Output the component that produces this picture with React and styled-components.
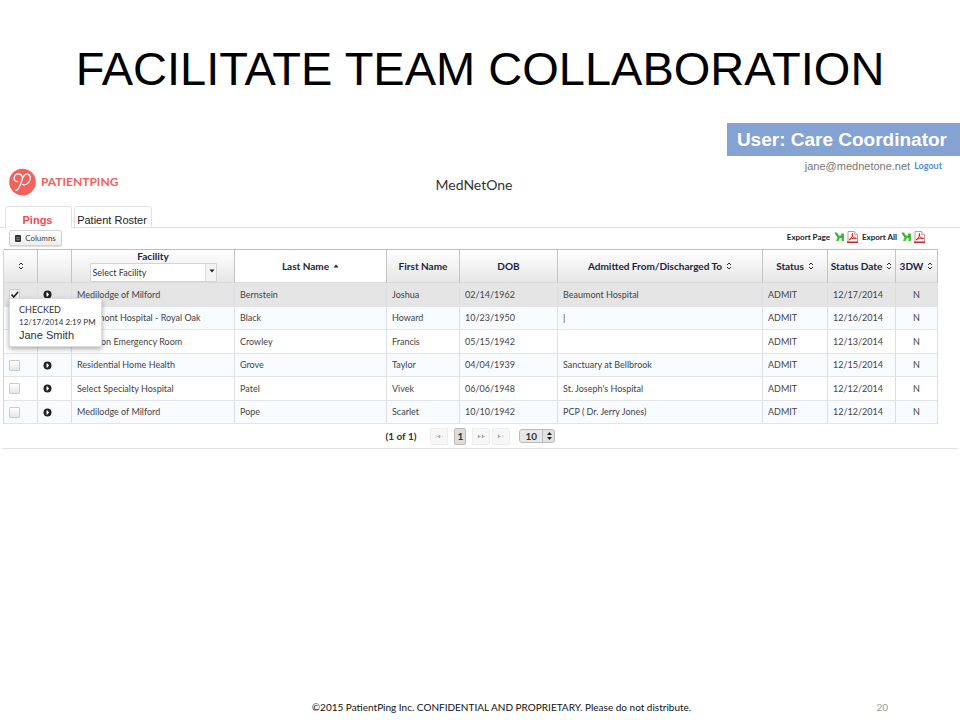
import { useState } from 'react'
import styled, { createGlobalStyle } from 'styled-components'

const GlobalStyle = createGlobalStyle`
  * {
    box-sizing: border-box;
  }

  body {
    margin: 0;
    background-color: #fff;
    color: #444;
    font-family: Lato, 'Liberation Sans', sans-serif;
    font-size: 9px;
  }

  button, input, select {
    margin: 0;
    font: inherit;
    color: inherit;
  }
`

const Page = styled.div`
  min-height: 100vh;
  display: flex;
  flex-direction: column;
`

const Title = styled.h1`
  margin: 0;
  padding-top: 41px;
  height: 123px;
  font: 47px/56px 'Liberation Sans', sans-serif;
  text-align: center;
  color: #000;
`

const UserBanner = styled.div`
  align-self: flex-end;
  padding: 0 13px 0 10px;
  font: bold 19px/33px 'Liberation Sans', sans-serif;
  color: #fff;
  background-color: #84a3d2;
`

const Header = styled.header`
  height: 50px;
  display: grid;
  grid-template-columns: 1fr auto 1fr;
`

const Brand = styled.a`
  padding: 12px 0 0 8px;
  display: flex;
  align-items: flex-start;
  gap: 5px;
  font: bold 12px/28px Lato, sans-serif;
  color: #f4615c;
  text-decoration: none;
`

const Organization = styled.h2`
  margin: 0;
  padding: 20px 12px 0 0;
  font: 14px/18px Lato, sans-serif;
  color: #333;
`

const Account = styled.div`
  padding: 3px 18px 0 0;
  display: flex;
  justify-content: flex-end;
  gap: 4px;
  font: 11px/14px 'Liberation Sans', sans-serif;
  color: #777;

  a {
    font-family: Lato, sans-serif;
    font-size: 9px;
    font-weight: bold;
    color: #4d8fd1;
    text-decoration: none;
  }
`

const Tabs = styled.nav`
  padding-left: 5px;
  display: flex;
  align-items: flex-end;
  gap: 2px;
  border-bottom: 1px solid #e2e2e2;
`

const Tab = styled.button`
  width: ${props => props.$width};
  height: 22px;
  margin-bottom: -1px;
  padding: 5px 2px 0 0;
  border: 1px solid #e2e2e2;
  border-bottom-color: ${props => props.$active ? '#fff' : '#e2e2e2'};
  border-radius: 3px 3px 0 0;
  font: ${props => props.$active ? 'bold' : 'normal'} 11px/14px 'Liberation Sans', sans-serif;
  color: ${props => props.$active ? '#ee4b55' : '#222'};
  background-color: #fff;
  white-space: nowrap;
  cursor: pointer;
`

const Panel = styled.main`
  margin: 0 2px;
  padding: 0 20px 0 1px;
  border-bottom: 1px solid #e2e2e2;
`

const Toolbar = styled.div`
  height: 21px;
  padding: 2px 13px 0 6px;
  display: flex;
  justify-content: space-between;
  align-items: flex-start;
`

const ColumnsButton = styled.button`
  width: 53px;
  height: 16px;
  padding: 0;
  display: flex;
  align-items: center;
  justify-content: center;
  gap: 4px;
  border: 1px solid #d2d2d2;
  border-radius: 2px;
  font-size: 8px;
  line-height: 14px;
  background: linear-gradient(#fff, #eee);
  box-shadow: 0 1px 1px #00000022;
`

const Exports = styled.div`
  display: flex;
  gap: 4px;
`

const ExportGroup = styled.div`
  display: flex;
  align-items: center;
  gap: 2px;
  font: bold 8px/14px Lato, sans-serif;
  color: #222;

  span {
    margin-right: 2px;
  }
`

const IconButton = styled.button`
  padding: 0;
  display: flex;
  border: 0;
  background: none;
  cursor: pointer;
`

const Table = styled.table`
  width: 100%;
  table-layout: fixed;
  border-collapse: separate;
  border-spacing: 0;
  border-left: 1px solid #d6d6d6;
`

const HeadCell = styled.th`
  height: 34px;
  padding: 0;
  border-top: 1px solid #bdbdbd;
  border-right: 1px solid #c4c4c4;
  border-bottom: 1px solid #dcdcdc;
  font-size: 10px;
  font-weight: bold;
  line-height: 12px;
  white-space: nowrap;
  color: #1b2444;
  background: ${props => props.$sorted ? '#fff' : 'linear-gradient(#fff, #e6e6e6)'};
`

const HeadLabel = styled.div`
  display: flex;
  align-items: center;
  justify-content: center;
  gap: 4px;
`

const FacilityHead = styled.div`
  height: 32px;
  display: flex;
  flex-direction: column;
  align-items: center;
  gap: 1px;
`

const FacilitySelect = styled.div`
  position: relative;
  width: 127px;

  select {
    display: block;
    width: 100%;
    height: 19px;
    padding: 0 2px;
    appearance: none;
    border: 1px solid #d4d4d4;
    border-radius: 1px;
    font-size: 9px;
    font-weight: normal;
    color: #333;
    background: linear-gradient(to left, #f4f4f4 10px, #ddd 10px, #ddd 11px, #fff 11px);
  }

  svg {
    position: absolute;
    top: 5px;
    right: 2px;
    pointer-events: none;
  }
`

const Row = styled.tr`
  height: 23px;
  background-color: ${props => props.$selected ? '#e5e5e5' : '#fff'};

  &:nth-child(odd) {
    height: 24px;
  }

  &:nth-child(even) {
    background-color: #f8fbff;
  }
`

const Cell = styled.td`
  padding: 0 5px;
  border-right: 1px solid #dcdfe3;
  border-bottom: 1px solid #e2e4e8;
  line-height: 12px;
  text-align: ${props => props.$align || 'left'};
  white-space: nowrap;
`

const CheckCell = styled(Cell)`
  position: relative;
`

const Check = styled.input`
  display: block;
  width: 11px;
  height: 11px;
  appearance: none;
  border: 1px solid #ccc;
  border-radius: 1px;
  background: linear-gradient(#fff, #e6e6e6);

  &:checked {
    background: #f1f1f1 url("data:image/svg+xml,%3Csvg xmlns='http://www.w3.org/2000/svg' viewBox='0 0 9 9'%3E%3Cpath d='M1.5 4.5 3.7 7 8 2' fill='none' stroke='%23222' stroke-width='1.7'/%3E%3C/svg%3E");
  }
`

const Popover = styled.div`
  position: absolute;
  z-index: 1;
  top: 15px;
  left: 5px;
  width: 93px;
  height: 49px;
  padding: 4px 9px;
  border: 1px solid #ddd;
  border-radius: 2px;
  line-height: 13px;
  color: #333;
  background-color: #fff;
  box-shadow: 0 2px 5px #00000055;
`

const CheckedAt = styled.div`
  font-size: 8px;
`

const CheckedBy = styled.div`
  font: 11px/12px 'Liberation Sans', sans-serif;
`

const Pager = styled.div`
  height: 24px;
  display: flex;
  align-items: center;
  justify-content: center;
  font-size: 10px;
  font-weight: bold;
  color: #333;
`

const PagerGroup = styled.div`
  margin: 0 9px 0 14px;
  display: flex;
  gap: 2px;
`

const PageButton = styled.button`
  width: ${props => props.$current ? '12px' : '18px'};
  height: 17px;
  margin: ${props => props.$current ? '0 4px' : '0'};
  padding: 0;
  display: flex;
  align-items: center;
  justify-content: center;
  border: 1px solid ${props => props.$current ? '#bbb' : '#eee'};
  border-radius: 2px;
  background-color: ${props => props.$current ? '#ddd' : '#f7f7f7'};
`

const PageSize = styled.div`
  position: relative;

  select {
    display: block;
    width: 36px;
    height: 14px;
    padding: 0 5px;
    appearance: none;
    border: 1px solid #bbb;
    border-radius: 3px;
    line-height: 12px;
    background: linear-gradient(to left, #e2e2e2 11px, #bbb 11px, #bbb 12px, #e8e8e8 12px);
  }

  svg {
    position: absolute;
    top: 3px;
    right: 3px;
    pointer-events: none;
  }
`

const Footer = styled.footer`
  margin-top: auto;
  padding-bottom: 6px;
  display: grid;
  grid-template-columns: 1fr auto 1fr;
  font: 10px/14px Lato, sans-serif;
  color: #111;
`

const Copyright = styled.span`
  grid-column: 2;
  padding-left: 43px;
`

const SlideNumber = styled.span`
  padding-right: 72px;
  text-align: right;
  color: #999;
`

const columns = [
  { name: 'Last Name', width: 152, sorted: true },
  { name: 'First Name', width: 73 },
  { name: 'DOB', width: 98 },
  { name: 'Admitted From/Discharged To', width: 205, sortable: true },
  { name: 'Status', width: 65, sortable: true },
  { name: 'Status Date', width: 68, sortable: true },
  { name: '3DW', width: 42, sortable: true },
]

const patients = [
  ['Medilodge of Milford', 'Bernstein', 'Joshua', '02/14/1962', 'Beaumont Hospital', '12/17/2014'],
  ['Beaumont Hospital - Royal Oak', 'Black', 'Howard', '10/23/1950', '|', '12/16/2014'],
  ['Brighton Emergency Room', 'Crowley', 'Francis', '05/15/1942', '', '12/13/2014'],
  ['Residential Home Health', 'Grove', 'Taylor', '04/04/1939', 'Sanctuary at Bellbrook', '12/15/2014'],
  ['Select Specialty Hospital', 'Patel', 'Vivek', '06/06/1948', "St. Joseph's Hospital", '12/12/2014'],
  ['Medilodge of Milford', 'Pope', 'Scarlet', '10/10/1942', 'PCP ( Dr. Jerry Jones)', '12/12/2014'],
]

const Logo = () => (
  <svg width="28" height="28" viewBox="0 0 28 28">
    <circle cx="14.500" cy="14" r="13.300" fill="#f4615c" />
    <path
      d="M8 22.500C11 22 12.500 17 14 12C15.500 7.500 17 5.500 19.500 6C22.500 6.500 23 10 21.500 13C20 16 17 17.500 14.500 16.500M14.500 9C13 5.500 9 5 7 7.500C5 10.500 6.500 14 9.500 13.500"
      fill="none"
      stroke="#fff"
      strokeWidth="1.300"
      strokeLinecap="round"
    />
  </svg>
)

const SortIcon = () => (
  <svg width="6" height="8" viewBox="0 0 6 8">
    <path d="M1 3 3 1 5 3M1 5 3 7 5 5" fill="none" stroke="#333" strokeWidth="1" />
  </svg>
)

const CaretIcon = ({ up }) => (
  <svg width="6" height="6" viewBox="0 0 6 6">
    <path d={up ? 'M0.500 4.500h5L3 1.500Z' : 'M0.500 1.500h5L3 4.500Z'} fill="#222" />
  </svg>
)

const GridIcon = () => (
  <svg width="6" height="7" viewBox="0 0 6 7">
    <rect width="6" height="7" rx="1" fill="#333" />
    <path d="M1 2.500h4M1 4.500h4M3 2v4" stroke="#999" strokeWidth="0.500" />
  </svg>
)

const SheetIcon = () => (
  <svg width="11" height="12" viewBox="0 0 11 12">
    <path d="M0.500 1.500h2.500l2 3h2V2.500h3V10H7.500V7H6L4.500 10H2L3.500 6.500Z" fill="#3fc234" />
    <path d="M1 2 4 6M7 5.500h2.500" stroke="#2a9422" strokeWidth="0.800" />
  </svg>
)

const PdfIcon = () => (
  <svg width="11" height="12" viewBox="0 0 11 12">
    <path d="M1 0.500h6.500L10.500 3.500v8H1Z" fill="#fff" stroke="#dc8e8e" />
    <path d="M7.500 0.500v3h3" fill="#f8dada" stroke="#dc8e8e" strokeWidth="0.700" />
    <path d="M2 9C5 7 6 4 5.500 2.500C4.500 4 6 7.500 9.500 7.500C8 6.500 4 7.500 2 9" fill="none" stroke="#d02020" />
    <path d="M0 10.500h11V12H0Z" fill="#c62525" />
  </svg>
)

const DetailIcon = () => (
  <svg width="9" height="9" viewBox="0 0 9 9">
    <circle cx="4.500" cy="4.500" r="4" fill="#222" />
    <path d="M3.500 2.500h1L6 4.500 4.500 6.500h-1Z" fill="#fff" />
  </svg>
)

const StepIcon = ({ path }) => (
  <svg width="8" height="5" viewBox="0 0 8 5">
    <path d={path} fill="#aaa" stroke="#aaa" strokeWidth="0.500" />
  </svg>
)

const StepperIcon = () => (
  <svg width="5" height="8" viewBox="0 0 5 8">
    <path d="M0 3h5L2.500 0ZM0 5h5L2.500 8Z" fill="#222" />
  </svg>
)

const ExportLinks = ({ label }) => (
  <ExportGroup>
    <span>{label}</span>
    <IconButton aria-label={`${label} to spreadsheet`}><SheetIcon /></IconButton>
    <IconButton aria-label={`${label} to PDF`}><PdfIcon /></IconButton>
  </ExportGroup>
)

function App() {
  const [checked, setChecked] = useState([0])

  const toggle = index => setChecked(
    checked.includes(index) ? checked.filter(i => i !== index) : [...checked, index]
  )

  return (
    <Page>
      <GlobalStyle />
      <Title>FACILITATE TEAM COLLABORATION</Title>
      <UserBanner>User: Care Coordinator</UserBanner>
      <Header>
        <Brand href="#">
          <Logo />
          PATIENTPING
        </Brand>
        <Organization>MedNetOne</Organization>
        <Account>
          <span>jane@mednetone.net</span>
          <a href="#">Logout</a>
        </Account>
      </Header>
      <Tabs>
        <Tab $active $width="67px">Pings</Tab>
        <Tab $width="78px">Patient Roster</Tab>
      </Tabs>
      <Panel>
        <Toolbar>
          <ColumnsButton><GridIcon />Columns</ColumnsButton>
          <Exports>
            <ExportLinks label="Export Page" />
            <ExportLinks label="Export All" />
          </Exports>
        </Toolbar>
        <Table>
          <colgroup>
            <col width="34" />
            <col width="34" />
            <col width="163" />
            {columns.map(column => <col key={column.name} width={column.width} />)}
          </colgroup>
          <thead>
            <tr>
              <HeadCell aria-label="Checked"><HeadLabel><SortIcon /></HeadLabel></HeadCell>
              <HeadCell aria-label="Details" />
              <HeadCell>
                <FacilityHead>
                  <label htmlFor="facility">Facility</label>
                  <FacilitySelect>
                    <select id="facility">
                      <option>Select Facility</option>
                    </select>
                    <CaretIcon />
                  </FacilitySelect>
                </FacilityHead>
              </HeadCell>
              {columns.map(column => (
                <HeadCell key={column.name} $sorted={column.sorted}>
                  <HeadLabel>
                    {column.name}
                    {column.sorted && <CaretIcon up />}
                    {column.sortable && <SortIcon />}
                  </HeadLabel>
                </HeadCell>
              ))}
            </tr>
          </thead>
          <tbody>
            {patients.map(([facility, last, first, dob, from, date], index) => (
              <Row key={index} $selected={index === 0}>
                <CheckCell>
                  <Check
                    type="checkbox"
                    aria-label={`Check ${first} ${last}`}
                    checked={checked.includes(index)}
                    onChange={() => toggle(index)}
                  />
                  {index === 0 && (
                    <Popover>
                      CHECKED
                      <CheckedAt>12/17/2014 2:19 PM</CheckedAt>
                      <CheckedBy>Jane Smith</CheckedBy>
                    </Popover>
                  )}
                </CheckCell>
                <Cell>
                  <IconButton aria-label={`Details of ${first} ${last}`}><DetailIcon /></IconButton>
                </Cell>
                <Cell>{facility}</Cell>
                <Cell>{last}</Cell>
                <Cell>{first}</Cell>
                <Cell>{dob}</Cell>
                <Cell>{from}</Cell>
                <Cell>ADMIT</Cell>
                <Cell>{date}</Cell>
                <Cell $align="center">N</Cell>
              </Row>
            ))}
          </tbody>
        </Table>
        <Pager>
          (1 of 1)
          <PagerGroup>
            <PageButton aria-label="First page"><StepIcon path="M1 1v3M5 1v3L2.500 2.500ZM7.500 2v1" /></PageButton>
            <PageButton $current>1</PageButton>
            <PageButton aria-label="Next page"><StepIcon path="M1 1v3L3.500 2.500ZM5 1v3L7.500 2.500Z" /></PageButton>
            <PageButton aria-label="Last page"><StepIcon path="M1 1v3L3.500 2.500ZM6 1v3" /></PageButton>
          </PagerGroup>
          <PageSize>
            <select aria-label="Rows per page" defaultValue="10">
              <option>10</option>
              <option>25</option>
            </select>
            <StepperIcon />
          </PageSize>
        </Pager>
      </Panel>
      <Footer>
        <Copyright>©2015 PatientPing Inc. CONFIDENTIAL AND PROPRIETARY. Please do not distribute.</Copyright>
        <SlideNumber>20</SlideNumber>
      </Footer>
    </Page>
  )
}

export default App
